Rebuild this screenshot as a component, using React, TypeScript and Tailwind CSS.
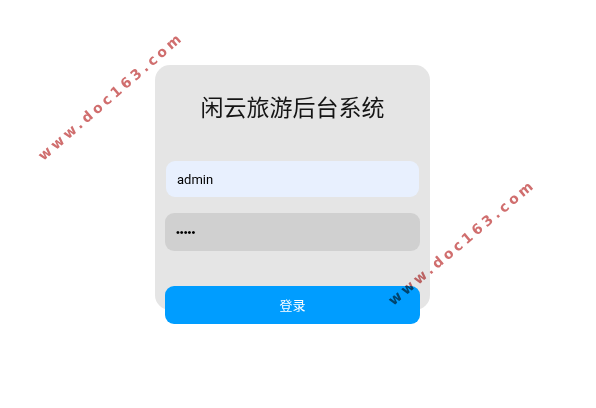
export default function App() {
	return (
		<div className="relative w-[596px] h-[408px] bg-white overflow-hidden font-['Liberation_Sans','Noto_Sans_CJK_SC',sans-serif]">
			<div className="pt-[65px] pl-[155px] flex">
				<div className="w-[275px] h-[245px] bg-[#e5e5e5] rounded-[15px] px-[10px] flex flex-col">
					<h1 className="shrink-0 mt-[26px] text-center text-[23px] leading-[30px] text-[#151515] font-['Noto_Sans_CJK_SC',sans-serif] font-normal">
						闲云旅游后台系统
					</h1>
					<input
						type="text"
						defaultValue="admin"
						className="shrink-0 mt-[40px] mx-[1px] h-[36px] rounded-[9px] bg-[#e8f0fe] px-[11px] text-[13px] text-black font-['Roboto',sans-serif] outline-none"
					/>
					<input
						type="password"
						defaultValue="12345"
						className="shrink-0 mt-[16px] h-[38px] rounded-[9px] bg-[#d0d0d0] px-[11px] text-[11px] text-black outline-none"
					/>
					<button
						type="button"
						className="shrink-0 mt-[35px] h-[38px] rounded-[9px] bg-[#009dff] text-white text-[13px] font-['Noto_Sans_CJK_SC',sans-serif]"
					>
						登录
					</button>
				</div>
			</div>
			<Watermark className="left-[15px] top-[86px] -rotate-[41deg]" />
			<Watermark className="left-[366px] top-[232px] -rotate-[40deg]" />
		</div>
	);
}

function Watermark({ className }: { className: string }) {
	return (
		<div
			className={`absolute w-[192px] text-center text-[14px] font-semibold tracking-[3.5px] text-[#d06e6e] mix-blend-multiply pointer-events-none select-none font-['DejaVu_Sans',sans-serif] ${className}`}
		>
			www.doc163.com
		</div>
	);
}
